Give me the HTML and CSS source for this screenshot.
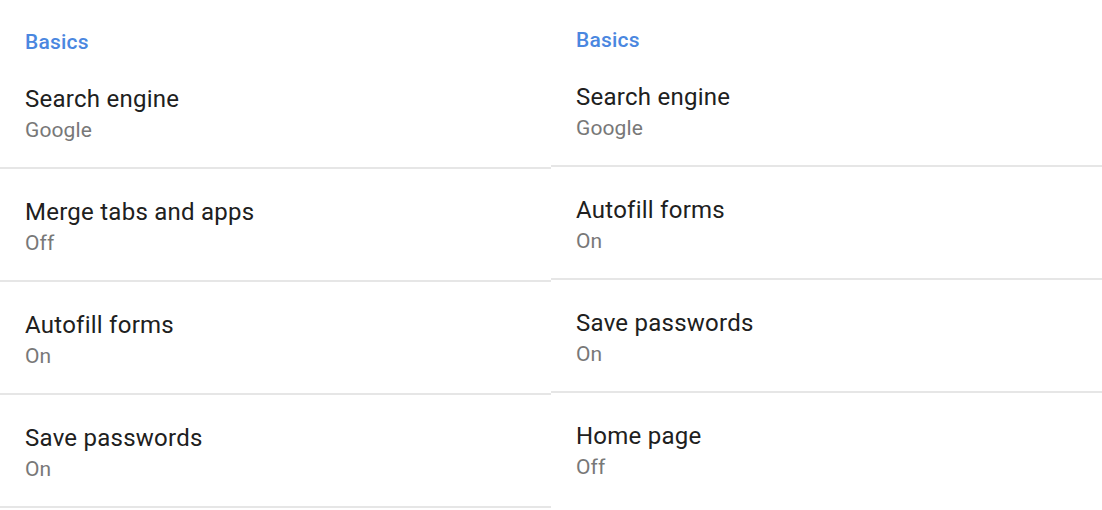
FILE: index.html
```html
<!DOCTYPE html>
<html lang="en">
<head>
<meta charset="utf-8">
<title>Settings - Basics</title>
<link rel="stylesheet" href="styles.css">
</head>
<body>
<div class="screens">
  <section class="panel panel-left">
    <h2 class="section-title">Basics</h2>
    <ul class="pref-list">
      <li class="pref"><div class="pref-title">Search engine</div><div class="pref-summary">Google</div></li>
      <li class="pref"><div class="pref-title">Merge tabs and apps</div><div class="pref-summary">Off</div></li>
      <li class="pref"><div class="pref-title">Autofill forms</div><div class="pref-summary">On</div></li>
      <li class="pref"><div class="pref-title">Save passwords</div><div class="pref-summary">On</div></li>
    </ul>
  </section>
  <section class="panel panel-right">
    <h2 class="section-title">Basics</h2>
    <ul class="pref-list">
      <li class="pref"><div class="pref-title">Search engine</div><div class="pref-summary">Google</div></li>
      <li class="pref"><div class="pref-title">Autofill forms</div><div class="pref-summary">On</div></li>
      <li class="pref"><div class="pref-title">Save passwords</div><div class="pref-summary">On</div></li>
      <li class="pref pref-last"><div class="pref-title">Home page</div><div class="pref-summary">Off</div></li>
    </ul>
  </section>
</div>
</body>
</html>
```
FILE: styles.css
```css
html, body {
  margin: 0;
  padding: 0;
  background: #ffffff;
  font-family: Roboto, "Noto Sans", Arial, sans-serif;
  overflow: hidden;
}

.screens {
  display: flex;
  width: 1102px;
  height: 510px;
}

.panel {
  box-sizing: border-box;
  overflow: hidden;
}

.panel-left {
  width: 551px;
  padding-top: 30px;
}

.panel-right {
  flex: 1;
  padding-top: 28px;
}

.section-title {
  margin: 0 0 2px 0;
  padding-left: 25px;
  font-size: 21px;
  line-height: 24px;
  font-weight: 500;
  letter-spacing: 0.2px;
  color: #4a87e0;
}

.pref-list {
  list-style: none;
  margin: 0;
  padding: 0;
}

.pref {
  padding: 28px 25px 22px 25px;
  border-bottom: 2px solid #e6e6e6;
}

.pref-last {
  border-bottom: none;
}

.pref-title {
  font-size: 24px;
  line-height: 31px;
  letter-spacing: 0.25px;
  color: #202020;
}

.pref-summary {
  font-size: 21px;
  line-height: 30px;
  letter-spacing: 0.1px;
  color: #787878;
}
```
